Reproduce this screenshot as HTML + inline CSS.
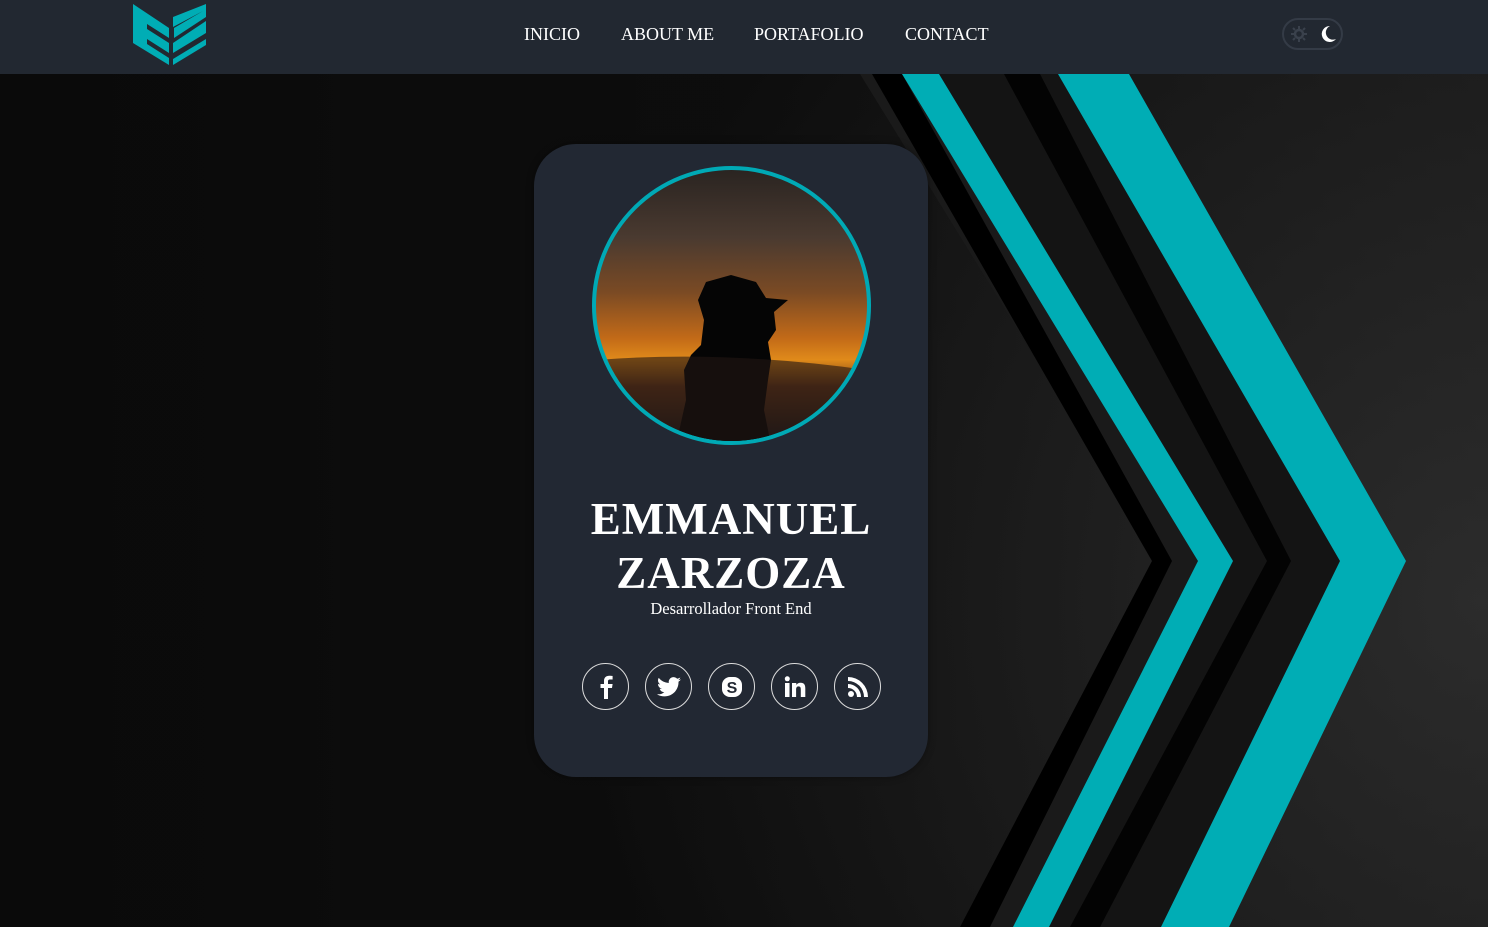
<!DOCTYPE html>
<html><head><meta charset="utf-8"><style>
*{margin:0;padding:0;box-sizing:border-box}
body{width:1488px;height:927px;overflow:hidden;background:#0c0c0c;font-family:"Liberation Serif",serif;position:relative}
#bg{position:absolute;left:0;top:0}
nav{position:absolute;left:0;top:0;width:1488px;height:74px;background:#222831;z-index:2}
.links{position:absolute;top:24px;left:524px;color:#fff;font-size:18px}
.links span{position:absolute;white-space:nowrap}
.toggle{position:absolute;left:1282px;top:18px;width:61px;height:32px;border:2px solid #343b46;border-radius:16px}
.card{position:absolute;left:534px;top:144px;width:394px;height:633px;background:#222833;border-radius:42px;z-index:1;box-shadow:0 0 8px rgba(0,0,0,.4)}
.avatar{position:absolute;left:58px;top:22px;width:279px;height:279px;border-radius:50%;border:4px solid #00a9b5;overflow:hidden;background:linear-gradient(180deg,#2a2421 0%,#4a3a30 25%,#7a4a24 45%,#c26a18 62%,#e08a1a 70%,#6a3a1a 80%,#1d1a1c 100%)}
.name{position:absolute;top:348px;width:100%;text-align:center;color:#fff;font-weight:bold;font-size:45px;line-height:54px;letter-spacing:1px}
.role{position:absolute;top:455px;width:100%;text-align:center;color:#fff;font-size:16.5px}
.soc{position:absolute;top:519px;left:48px}
.soc div{position:absolute;width:47px;height:47px;border:1.5px solid #ddd;border-radius:50%;display:flex;align-items:center;justify-content:center}
</style></head><body>
<svg id="bg" width="1488" height="927">
<defs>
<radialGradient id="g" cx="1480" cy="600" r="900" gradientUnits="userSpaceOnUse"><stop offset="0" stop-color="#2e2e2e"/><stop offset=".6" stop-color="#191919"/><stop offset="1" stop-color="#0a0a0a"/></radialGradient>
<linearGradient id="l" x1="0" x2="1" y1="0" y2="0"><stop offset="0" stop-color="#0a0a0a"/><stop offset=".6" stop-color="#161616"/><stop offset="1" stop-color="#262626"/></linearGradient>
</defs>
<rect width="1488" height="927" fill="url(#l)"/>
<rect width="1488" height="927" fill="url(#g)" opacity=".7"/>
<polygon points="860,74 902,74 1198,561 1013,927 975,927 1160,561" fill="#1a1a1a"/>
<polygon points="872,74 902,74 1172,561 990,927 960,927 1152,561" fill="#000"/>
<polygon points="939,74 1058,74 1340,561 1161,927 1048,927 1233,561" fill="#141414"/>
<polygon points="1004,74 1040,74 1291,561 1100,927 1070,927 1267,561" fill="#030303"/>
<polygon points="902,74 939,74 1233,561 1049,927 1013,927 1198,561" fill="#00adb5"/>
<polygon points="1058,74 1129,74 1406,561 1229,927 1161,927 1340,561" fill="#00adb5"/>
</svg>
<nav>
<svg style="position:absolute;left:131px;top:3px" width="76" height="62" viewBox="0 0 76 62">
<polygon points="2,1 38,25 38,35 16,21 16,26 38,40 38,50 16,36 16,41 38,55 38,62 2,40" fill="#00adb5"/>
<polygon points="75,1 75,14 43,35 43,25 72,8 42,24 42,14" fill="#00adb5"/>
<polygon points="75,36 42,56 42,62 75,42" fill="#00adb5"/>
<polygon points="75,18 75,30 42,50 42,40" fill="#00adb5"/>
</svg>
<div class="links"><span style="left:0">INICIO</span><span style="left:97px">ABOUT ME</span><span style="left:230px">PORTAFOLIO</span><span style="left:381px">CONTACT</span></div>
<div class="toggle">
<svg style="position:absolute;left:6px;top:5px" width="18" height="18" viewBox="0 0 18 18"><circle cx="9" cy="9" r="4" fill="none" stroke="#3a414c" stroke-width="2.5"/><g stroke="#3a414c" stroke-width="2"><line x1="9" y1="1" x2="9" y2="4"/><line x1="9" y1="14" x2="9" y2="17"/><line x1="1" y1="9" x2="4" y2="9"/><line x1="14" y1="9" x2="17" y2="9"/><line x1="3" y1="3" x2="5" y2="5"/><line x1="13" y1="13" x2="15" y2="15"/><line x1="3" y1="15" x2="5" y2="13"/><line x1="13" y1="5" x2="15" y2="3"/></g></svg>
<svg style="position:absolute;left:37px;top:5px" width="16" height="18" viewBox="0 0 16 18"><path d="M9 1A8 8 0 1 0 15 14A7 7 0 0 1 9 1Z" fill="#fff"/></svg>
</div>
</nav>
<div class="card">
<div class="avatar">
<svg width="271" height="271" viewBox="0 0 271 271"><path d="M80 275 L90 230 L88 200 L95 185 L105 175 L108 150 L102 130 L110 112 L135 105 L160 112 L170 128 L192 130 L178 142 L180 160 L172 172 L175 190 L172 210 L168 240 L175 275Z" fill="#050505"/><path d="M0 190 Q130 180 271 200 L271 271 L0 271Z" fill="#221512" opacity=".6"/></svg>
</div>
<div class="name">EMMANUEL<br>ZARZOZA</div>
<div class="role">Desarrollador Front End</div>
<div class="soc">
<div style="left:0"><svg width="20" height="24" viewBox="0 0 20 24"><path d="M12 24V13h4l.6-4H12V6.5c0-1.2.4-2 2-2h2.6V1c-.5 0-1.8-.2-3.3-.2C10 .8 8 2.8 8 6v3H4.5v4H8v11Z" fill="#fff"/></svg></div>
<div style="left:63px"><svg width="24" height="20" viewBox="0 0 24 20"><path d="M24 2.4c-.9.4-1.8.6-2.8.8 1-.6 1.8-1.6 2.1-2.7-1 .6-2 1-3.1 1.2A4.9 4.9 0 0 0 11.8 6 14 14 0 0 1 1.7.9a4.9 4.9 0 0 0 1.5 6.6c-.8 0-1.6-.3-2.2-.6 0 2.4 1.7 4.4 3.900 4.8-.7.2-1.5.2-2.2.1.6 2 2.4 3.4 4.6 3.4A9.9 9.9 0 0 1 0 17.2 14 14 0 0 0 7.5 19.4c9 0 14-7.5 14-14v-.6c1-.7 1.8-1.6 2.500-2.4Z" fill="#fff"/></svg></div>
<div style="left:126px"><svg width="22" height="22" viewBox="0 0 22 22"><rect x="1" y="1" width="20" height="20" rx="8" fill="#fff"/><text x="11" y="17" font-family="Liberation Sans" font-weight="bold" font-size="16" fill="#222833" text-anchor="middle">S</text></svg></div>
<div style="left:189px"><svg width="22" height="22" viewBox="0 0 22 22"><rect x="1" y="7" width="4.5" height="14" fill="#fff"/><circle cx="3.3" cy="2.8" r="2.5" fill="#fff"/><path d="M8 7h4.3v2c.7-1.3 2.3-2.3 4.3-2.3 4 0 4.7 2.6 4.7 6V21h-4.5v-7c0-1.7 0-3.6-2.2-3.6s-2.5 1.7-2.5 3.5V21H8Z" fill="#fff"/></svg></div>
<div style="left:252px"><svg width="22" height="22" viewBox="0 0 22 22"><circle cx="4" cy="18" r="3" fill="#fff"/><path d="M1 8a13 13 0 0 1 13 13h-4A9 9 0 0 0 1 12Z" fill="#fff"/><path d="M1 1a20 20 0 0 1 20 20h-4A16 16 0 0 0 1 5Z" fill="#fff"/></svg></div>
</div>
</div>
</body></html>
